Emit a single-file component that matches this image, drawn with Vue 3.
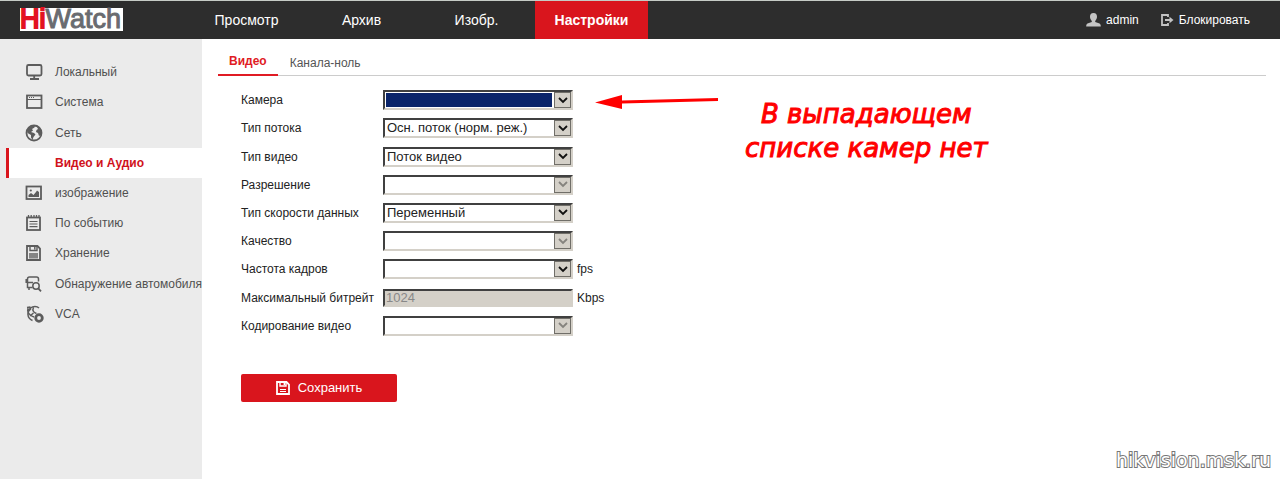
<script setup>
import { ref } from 'vue'

const nav = ['Просмотр', 'Архив', 'Изобр.', 'Настройки']
const activeNav = 'Настройки'

const menu = [
  { label: 'Локальный', icon: 'monitor' },
  { label: 'Система', icon: 'window' },
  { label: 'Сеть', icon: 'globe' },
  { label: 'Видео и Аудио', icon: '' },
  { label: 'изображение', icon: 'picture' },
  { label: 'По событию', icon: 'notepad' },
  { label: 'Хранение', icon: 'disk' },
  { label: 'Обнаружение автомобиля', icon: 'vehicle' },
  { label: 'VCA', icon: 'vca' },
]
const activeMenu = 'Видео и Аудио'

const fields = ref([
  { id: 'camera', label: 'Камера', value: '', focused: true },
  { id: 'stream', label: 'Тип потока', value: 'Осн. поток (норм. реж.)' },
  { id: 'video', label: 'Тип видео', value: 'Поток видео' },
  { id: 'resolution', label: 'Разрешение', value: '', disabled: true },
  { id: 'ratetype', label: 'Тип скорости данных', value: 'Переменный' },
  { id: 'quality', label: 'Качество', value: '', disabled: true },
  { id: 'fps', label: 'Частота кадров', value: '', unit: 'fps' },
  { id: 'bitrate', label: 'Максимальный битрейт', value: '1024', unit: 'Kbps', input: true, disabled: true },
  { id: 'codec', label: 'Кодирование видео', value: '', disabled: true },
])
</script>

<template>
  <div class="page">
    <header class="top">
      <a class="logo" href="#"><span class="hi">Hi</span>Watch</a>
      <nav class="nav">
        <a v-for="n in nav" :key="n" href="#" :class="{ active: n === activeNav }">{{ n }}</a>
      </nav>
      <div class="user">
        <a href="#">
          <svg width="15" height="14" viewBox="0 0 15 14" fill="#c4c4c4">
            <path d="M7.500 0C5 0 4 1.700 4 3.800c0 1.700.8 3.200 1.800 4.100v1L1.500 10.500C.5 11 .2 12 .2 13.600h14.600c0-1.600-.3-2.600-1.300-3.100L9.200 8.900v-1C10.200 7 11 5.500 11 3.800 11 1.700 10 0 7.500 0z" />
          </svg>
          admin
        </a>
        <a href="#">
          <svg width="13" height="12" viewBox="0 0 13 12" fill="none" stroke="#c4c4c4" stroke-width="1.800">
            <path d="M7 3V1H1v10h6V9M4 6h5" />
            <path d="M8.500 2.800L12.500 6l-4 3.200z" fill="#c4c4c4" stroke="none" />
          </svg>
          Блокировать
        </a>
      </div>
    </header>

    <div class="body">
      <aside class="side">
        <a v-for="m in menu" :key="m.label" href="#" :class="{ active: m.label === activeMenu }">
          <svg class="icon" width="20" height="18" viewBox="0 0 20 18" fill="none" stroke="#5c5c5c" stroke-width="1.800">
            <template v-if="m.icon === 'monitor'">
              <rect x="2" y="2" width="14.500" height="10.500" rx="1.500" />
              <path d="M9.200 12.500v3M5 16h9" />
            </template>
            <template v-else-if="m.icon === 'window'">
              <rect x="2" y="2.500" width="14.500" height="12.500" />
              <path d="M2 6.500h14.500" stroke-width="1" />
              <path d="M4 4.500h5" stroke-width="1" stroke-dasharray="1 1" />
            </template>
            <template v-else-if="m.icon === 'globe'">
              <circle cx="9" cy="9" r="7.500" />
              <path d="M2 6l4-4 4-.5-.5 2L7 5l1 1.500L6 8l3 1 1.500 1.500L8.500 13l-1 3L6 13.500V11L2.500 9zM12 3l3 1 1.500 4-.5 3-2 1-1-3-2-1 .5-2 1.500-1z" fill="#5c5c5c" stroke="none" />
            </template>
            <template v-else-if="m.icon === 'picture'">
              <rect x="1.500" y="2.500" width="14.500" height="12.500" />
              <path d="M3.500 13V11l2.500-2 2.500 2L11 8l1-1.500 2 1.500v5z" fill="#5c5c5c" stroke="none" />
              <circle cx="5.800" cy="6.500" r="1.100" fill="#5c5c5c" stroke="none" />
            </template>
            <template v-else-if="m.icon === 'notepad'">
              <rect x="2" y="3.500" width="13" height="12.500" />
              <path d="M3.500 1v3M6.200 1v3M9 1v3M11.500 1v3M14 1v3" stroke-width="1.300" />
              <path d="M4.500 7.500h8M4.500 10h8M4.500 12.700h8" stroke-width="1.200" />
            </template>
            <template v-else-if="m.icon === 'disk'">
              <path d="M2 2h10.500L15 4.500V16H2z" />
              <path d="M5 2v4.500h7V2M9.800 2.500v3" stroke-width="1.400" />
              <path d="M4 9h9v5.500H4z" fill="#858585" stroke="none" />
            </template>
            <template v-else-if="m.icon === 'vehicle'">
              <path d="M7.500 12.500H2.500V4q0-2 2-2h7q2 0 2 2v2.500M2.500 7.500h5.500M4 12.500v2.500M1.200 4v4" stroke-width="1.500" />
              <circle cx="11" cy="11" r="3.200" stroke-width="1.500" />
              <path d="M13.300 13.300l2.700 3" />
            </template>
            <template v-else-if="m.icon === 'vca'">
              <path d="M14 3C12 1 8 1 5.500 3 2 6 1.500 13 7.500 15.500M2 2.500l3.500-.5M3 3c-1.500 4 2 8 6 9M8.500 2.500c-1.500 3 0 5 3 6M2.500 7.500L6 3.500M5 11l3.500-3" stroke-width="1.500" />
              <circle cx="14" cy="13" r="3.300" stroke-width="2.800" />
            </template>
          </svg>
          {{ m.label }}
        </a>
      </aside>

      <main class="main">
        <div class="tabs">
          <a href="#" class="active">Видео</a>
          <a href="#">Канала-ноль</a>
        </div>

        <div class="content">
          <form @submit.prevent>
            <div class="fields">
              <div v-for="f in fields" :key="f.id" class="row">
                <label :for="f.id">{{ f.label }}</label>
                <input v-if="f.input" :id="f.id" v-model="f.value" class="field" type="text" :disabled="f.disabled">
                <div v-else class="field combo" :class="{ focused: f.focused, disabled: f.disabled }">
                  <select :id="f.id" v-model="f.value" :disabled="f.disabled">
                    <option :value="f.value">{{ f.value }}</option>
                  </select>
                  <span class="arrow">
                    <svg width="10" height="7" viewBox="0 0 10 7" fill="none" stroke="currentColor" stroke-width="1.800">
                      <path d="M1 1l4 4 4-4" />
                    </svg>
                  </span>
                </div>
                <span v-if="f.unit" class="unit">{{ f.unit }}</span>
              </div>
            </div>
            <button class="save" type="submit">
              <svg width="14" height="14" viewBox="0 0 14 14" fill="none" stroke="#fff" stroke-width="1.800">
                <path d="M1 1h9.500L13 3.500V13H1z" />
                <path d="M4 1v4h6V1M8.300 1.500v2.500" stroke-width="1.400" />
                <path d="M4 8.500h6M4 10.500h6" stroke-width="1.200" />
              </svg>
              Сохранить
            </button>
          </form>

          <div class="note">
            <svg width="124" height="16" viewBox="0 0 124 16" fill="#f00">
              <path d="M0 8.500L27 1v5.500L123 4v3L27 9.500V15z" />
            </svg>
            <p>В выпадающем<br>списке камер нет</p>
          </div>
        </div>
        <div class="watermark">hikvision.msk.ru</div>
      </main>
    </div>
  </div>
</template>

<style>
body {
  margin: 0;
  background: #fff;
}
</style>

<style scoped>
.page {
  display: flex;
  flex-direction: column;
  min-height: 100vh;
  font: 12px/16px "Liberation Sans", Arial, sans-serif;
  color: #222;
}
a {
  color: inherit;
  text-decoration: none;
}
.top {
  display: flex;
  height: 38px;
  border-top: 1px solid #c5cbc5;
  background: #2d2d2d;
  color: #fff;
}
.logo {
  width: 103px;
  height: 23px;
  margin: 7px 67px 0 20px;
  background: #fff;
  color: #696b70;
  font: 27px/23px "Liberation Sans", Arial, sans-serif;
  -webkit-text-stroke: 1px currentColor;
  white-space: nowrap;
}
.hi {
  color: #e31221;
  -webkit-text-stroke: 2px #e31221;
}
.nav {
  display: flex;
  gap: 2px;
  flex: 1;
}
.nav a {
  width: 113px;
  text-align: center;
  font-size: 14px;
  line-height: 38px;
}
.nav .active {
  background: #d9151d;
  font-weight: bold;
}
.user {
  display: flex;
  gap: 22px;
  padding-right: 30px;
}
.user a {
  display: flex;
  align-items: center;
  gap: 5px;
}
.body {
  display: flex;
  flex: 1;
}
.side {
  display: grid;
  grid-auto-rows: 1fr;
  align-self: stretch;
  align-content: start;
  box-sizing: border-box;
  width: 202px;
  padding: 18px 0 150px;
  background: #ebebeb;
  color: #505050;
}
.side a {
  display: flex;
  align-items: center;
  gap: 10px;
  min-height: 30px;
  margin-left: 6px;
  padding-left: 16px;
  border-left: 3px solid transparent;
  white-space: nowrap;
}
.side .active {
  border-color: #d9151d;
  background: #fff;
  color: #d0121c;
  font-weight: bold;
}
.icon {
  flex: none;
}
.main {
  display: flex;
  flex-direction: column;
  flex: 1;
  padding: 10px 14px 0 16px;
}
.tabs {
  display: flex;
  height: 26px;
  border-bottom: 1px solid #ccc;
  color: #555;
}
.tabs a {
  padding: 6px 12px 0;
}
.tabs .active {
  padding: 4px 11px 0;
  border-bottom: 2px solid #e01b24;
  margin-bottom: -1px;
  color: #e01b24;
  font-weight: bold;
}
.content {
  display: flex;
  padding: 10px 0 0 23px;
}
.fields {
  display: grid;
  grid-auto-rows: 1fr;
  min-height: 254px;
}
.row {
  display: flex;
  align-items: center;
}
.row label {
  width: 142px;
}
.field {
  box-sizing: border-box;
  width: 190px;
  height: 20px;
  border: 2px solid;
  border-color: #404040 #d4d0c8 #d4d0c8 #404040;
}
input.field {
  height: 18px;
  padding: 0 1px;
  background: #d4d0c8;
  color: #888;
  font: 13px/14px "Liberation Sans", Arial, sans-serif;
}
.combo {
  position: relative;
  display: flex;
  background: #fff;
}
.combo select {
  flex: 1;
  appearance: none;
  margin: 0 18px 0 0;
  padding: 0 2px;
  border: 0;
  border-radius: 0;
  outline: 0;
  background: #fff;
  color: #222;
  font: 13px/16px "Liberation Sans", Arial, sans-serif;
  opacity: 1;
}
.focused select {
  border: 1px solid #fff;
  background: #0a246a;
}
.arrow {
  position: absolute;
  top: 0;
  right: 0;
  bottom: 0;
  display: flex;
  align-items: center;
  justify-content: center;
  box-sizing: border-box;
  width: 17px;
  border: 1px solid #706e68;
  background: #d4d0c8;
  color: #111;
  pointer-events: none;
}
.disabled .arrow {
  color: #85837e;
}
.unit {
  margin-left: 4px;
}
form {
  width: 354px;
}
.save {
  display: flex;
  align-items: center;
  justify-content: center;
  gap: 8px;
  width: 156px;
  height: 28px;
  margin-top: 34px;
  padding: 0;
  border: 0;
  border-radius: 2px;
  background: #d9151d;
  color: #fff;
  font: 13px/16px "Liberation Sans", Arial, sans-serif;
}
.note {
  display: flex;
  align-items: flex-start;
  gap: 26px;
  padding-top: 8px;
}
.note svg {
  flex: none;
}
.note p {
  margin: 3px 0 0;
  color: #f00;
  font: italic 26px/34px "DejaVu Sans", sans-serif;
  -webkit-text-stroke: 1px #f00;
  text-align: center;
  white-space: nowrap;
}
.watermark {
  margin: auto -5px 6px auto;
  color: #fff;
  font: 19px/26px "DejaVu Sans", sans-serif;
  -webkit-text-stroke: 2px #777;
  paint-order: stroke fill;
}
</style>
